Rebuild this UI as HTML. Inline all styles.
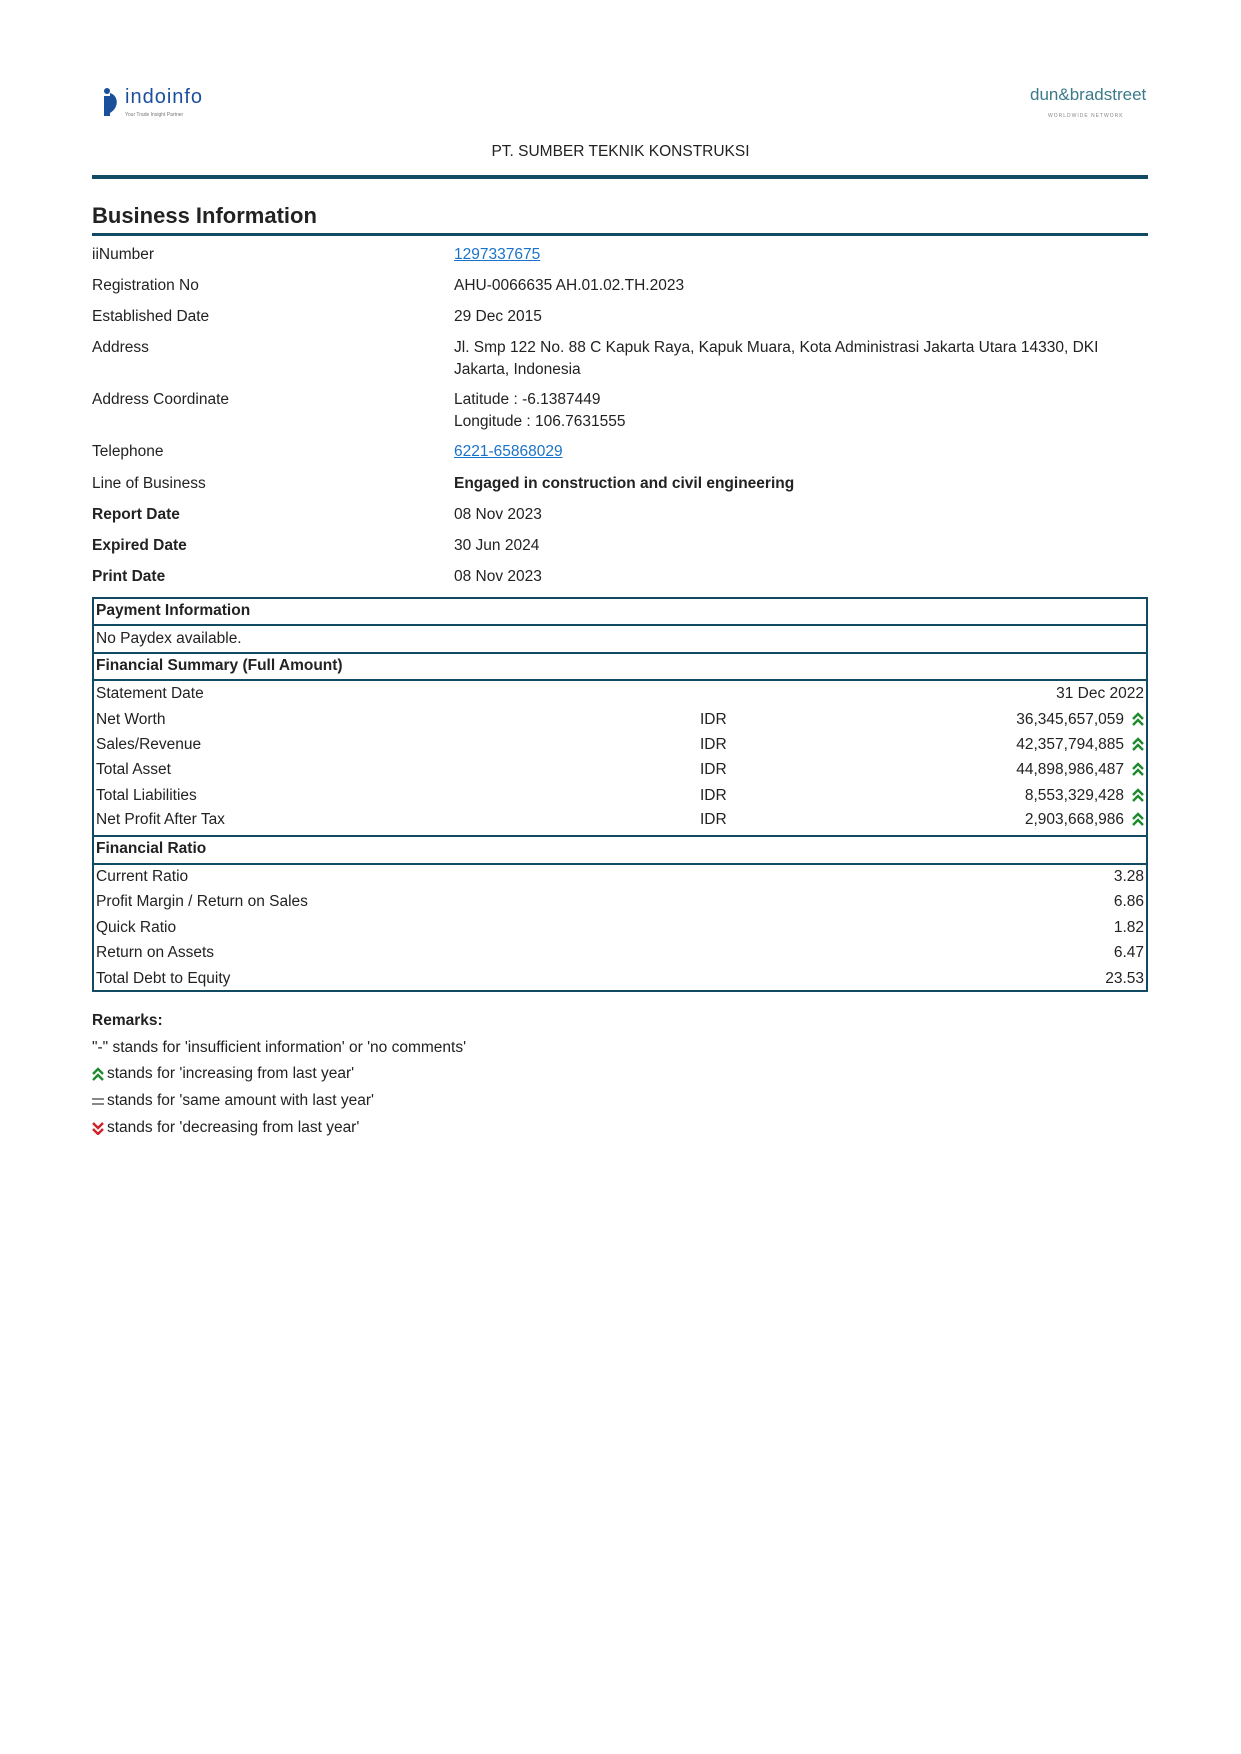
<!DOCTYPE html>
<html><head><meta charset="utf-8"><style>
body{margin:0;width:1241px;height:1754px;background:#fff;font-family:"Liberation Sans",sans-serif;color:#222;font-size:15.5px;position:relative}
.w{position:absolute;left:0;top:3px;width:1241px;height:1200px}
.a{position:absolute;white-space:nowrap;line-height:18px}
.b{font-weight:bold}
a{color:#1a73c8;text-decoration:underline}
.hl{position:absolute;left:92px;width:1056px;background:#134a63}
.tb{position:absolute;left:92px;width:1052px;border:2px solid #134a63;top:594px;height:391px}
.r{position:absolute;right:0;white-space:nowrap;line-height:18px}
.ln{position:absolute;left:0;right:0;height:2px;background:#134a63}
</style></head><body>
<div class="w">
<svg class="a" style="left:98px;top:84px" width="24" height="30" viewBox="0 0 24 30"><circle cx="9" cy="4" r="3" fill="#1a4f9c"/><path d="M6 9h6v20H6z" fill="#1a4f9c"/><path d="M12 6c8 2 10 14 0 20z" fill="#1a4f9c"/></svg>
<div class="a" style="left:125px;top:85px;font-size:20px;color:#1a4f9c;letter-spacing:1px">indoinfo</div>
<div class="a" style="left:125px;top:103px;font-size:5px;color:#777">Your Trade Insight Partner</div>
<div class="a" style="left:1030px;top:83px;font-size:17px;color:#3c7a8a">dun&amp;bradstreet</div>
<div class="a" style="left:1048px;top:104px;font-size:5px;color:#888;letter-spacing:1px">WORLDWIDE NETWORK</div>
<div class="a" style="left:0;width:1241px;text-align:center;top:140px">PT. SUMBER TEKNIK KONSTRUKSI</div>
<div class="hl" style="top:172px;height:4px"></div>
<div class="a b" style="left:92px;top:201px;font-size:22px;line-height:24px">Business Information</div>
<div class="hl" style="top:230px;height:3px"></div>
<div class="a" style="left:92px;top:243px">iiNumber</div><div class="a" style="left:454px;top:243px"><a>1297337675</a></div>
<div class="a" style="left:92px;top:274px">Registration No</div><div class="a" style="left:454px;top:274px">AHU-0066635 AH.01.02.TH.2023</div>
<div class="a" style="left:92px;top:305px">Established Date</div><div class="a" style="left:454px;top:305px">29 Dec 2015</div>
<div class="a" style="left:92px;top:336px">Address</div><div class="a" style="left:454px;top:336px;line-height:22px;margin-top:-2px">Jl. Smp 122 No. 88 C Kapuk Raya, Kapuk Muara, Kota Administrasi Jakarta Utara 14330, DKI<br>Jakarta, Indonesia</div>
<div class="a" style="left:92px;top:388px">Address Coordinate</div><div class="a" style="left:454px;top:386px;line-height:22px">Latitude : -6.1387449<br>Longitude : 106.7631555</div>
<div class="a" style="left:92px;top:440px">Telephone</div><div class="a" style="left:454px;top:440px"><a>6221-65868029</a></div>
<div class="a" style="left:92px;top:472px">Line of Business</div><div class="a b" style="left:454px;top:472px">Engaged in construction and civil engineering</div>
<div class="a b" style="left:92px;top:503px">Report Date</div><div class="a" style="left:454px;top:503px">08 Nov 2023</div>
<div class="a b" style="left:92px;top:534px">Expired Date</div><div class="a" style="left:454px;top:534px">30 Jun 2024</div>
<div class="a b" style="left:92px;top:565px">Print Date</div><div class="a" style="left:454px;top:565px">08 Nov 2023</div>
<div class="tb">
<div class="ln" style="top:25px"></div>
<div class="ln" style="top:53px"></div>
<div class="ln" style="top:80px"></div>
<div class="ln" style="top:236px"></div>
<div class="ln" style="top:264px"></div>
<div class="a b" style="left:2px;top:3px">Payment Information</div>
<div class="a" style="left:2px;top:31px">No Paydex available.</div>
<div class="a b" style="left:2px;top:58px">Financial Summary (Full Amount)</div>
<div class="a" style="left:2px;top:86px">Statement Date</div><div class="r" style="top:86px;right:2px">31 Dec 2022</div>
<div class="a" style="left:2px;top:112px">Net Worth</div><div class="a" style="left:606px;top:112px">IDR</div><div class="r" style="top:112px;right:22px">36,345,657,059</div>
<div class="a" style="left:2px;top:137px">Sales/Revenue</div><div class="a" style="left:606px;top:137px">IDR</div><div class="r" style="top:137px;right:22px">42,357,794,885</div>
<div class="a" style="left:2px;top:162px">Total Asset</div><div class="a" style="left:606px;top:162px">IDR</div><div class="r" style="top:162px;right:22px">44,898,986,487</div>
<div class="a" style="left:2px;top:188px">Total Liabilities</div><div class="a" style="left:606px;top:188px">IDR</div><div class="r" style="top:188px;right:22px">8,553,329,428</div>
<div class="a" style="left:2px;top:212px">Net Profit After Tax</div><div class="a" style="left:606px;top:212px">IDR</div><div class="r" style="top:212px;right:22px">2,903,668,986</div>
<svg style="position:absolute;right:2px;top:113px" width="12" height="120" viewBox="0 0 12 120"><g fill="none" stroke="#1e8a2e" stroke-width="2.4"><path d="M1 7l5-5 5 5M1 13l5-5 5 5"/><path transform="translate(0,25)" d="M1 7l5-5 5 5M1 13l5-5 5 5"/><path transform="translate(0,50)" d="M1 7l5-5 5 5M1 13l5-5 5 5"/><path transform="translate(0,76)" d="M1 7l5-5 5 5M1 13l5-5 5 5"/><path transform="translate(0,100)" d="M1 7l5-5 5 5M1 13l5-5 5 5"/></g></svg>
<div class="a b" style="left:2px;top:241px">Financial Ratio</div>
<div class="a" style="left:2px;top:269px">Current Ratio</div><div class="r" style="top:269px;right:2px">3.28</div>
<div class="a" style="left:2px;top:294px">Profit Margin / Return on Sales</div><div class="r" style="top:294px;right:2px">6.86</div>
<div class="a" style="left:2px;top:320px">Quick Ratio</div><div class="r" style="top:320px;right:2px">1.82</div>
<div class="a" style="left:2px;top:345px">Return on Assets</div><div class="r" style="top:345px;right:2px">6.47</div>
<div class="a" style="left:2px;top:371px">Total Debt to Equity</div><div class="r" style="top:371px;right:2px">23.53</div>
</div>
<div class="a b" style="left:92px;top:1009px">Remarks:</div>
<div class="a" style="left:92px;top:1036px">"-" stands for 'insufficient information' or 'no comments'</div>
<svg class="a" style="left:92px;top:1064px" width="12" height="14"><path d="M1 7l5-5 5 5M1 13l5-5 5 5" fill="none" stroke="#1e8a2e" stroke-width="2.4"/></svg>
<div class="a" style="left:107px;top:1062px">stands for 'increasing from last year'</div>
<svg class="a" style="left:92px;top:1091px" width="12" height="14"><path d="M0 5h12M0 10h12" stroke="#888" stroke-width="2"/></svg>
<div class="a" style="left:107px;top:1089px">stands for 'same amount with last year'</div>
<svg class="a" style="left:92px;top:1118px" width="12" height="14"><path d="M1 2l5 5 5-5M1 8l5 5 5-5" fill="none" stroke="#d0202a" stroke-width="2.4"/></svg>
<div class="a" style="left:107px;top:1116px">stands for 'decreasing from last year'</div>
</div>
</body></html>
